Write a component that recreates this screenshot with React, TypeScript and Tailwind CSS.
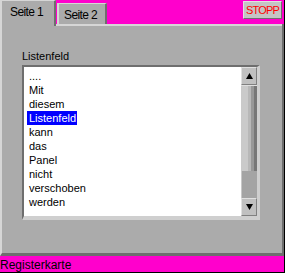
import React from "react";

const items = ["....", "Mit", "diesem", "Listenfeld", "kann", "das", "Panel", "nicht", "verschoben", "werden"];

export default function App() {
  return (
    <div
      className="w-[285px] h-[273px] bg-[#ff00cc] border-r border-b border-black flex flex-col text-[11px] leading-[13px] text-black"
      style={{ fontFamily: '"Liberation Sans", Arial, sans-serif' }}
    >
      {/* tab row */}
      <div className="flex h-[26px]">
        <div className="w-[56px] h-[26px] bg-[#ababab] border-l-2 border-t border-r-2 border-l-[#d6d6d6] border-t-[#d6d6d6] border-r-[#6e6e6e] pl-[8px] pt-[4px] text-[12px] leading-[14px] tracking-[-0.6px]">
          Seite 1
        </div>
        <div className="flex-1 flex flex-col">
          <div className="flex h-[24px] items-start">
            <div className="mt-[3px] ml-[1px] w-[50px] h-[21px] bg-[#ababab] border-l-2 border-t border-r-2 border-l-[#d6d6d6] border-t-[#d6d6d6] border-r-[#6e6e6e] pl-[5px] pt-[4px] text-[12px] leading-[14px] tracking-[-0.6px]">
              Seite 2
            </div>
            <div className="flex-1" />
            <div className="mt-[1px] mr-[2px] w-[39px] h-[18px] bg-[#c4c4c4] border border-t-[#e2e2e2] border-l-[#e2e2e2] border-r-[#6e6e6e] border-b-[#6e6e6e] flex items-center justify-center text-[#ff0000] tracking-[-0.8px]">
              STOPP
            </div>
          </div>
          <div className="flex h-[2px]">
            <div className="flex-1 bg-[#d6d6d6]" />
            <div className="w-[2px] bg-[#6e6e6e]" />
          </div>
        </div>
      </div>

      {/* panel */}
      <div className="flex-1 bg-[#ababab] border-l-2 border-r-2 border-b-[3px] border-l-[#d6d6d6] border-r-[#6e6e6e] border-b-[#6e6e6e] pt-[24px] pl-[20px]">
        <div className="h-[13px] mb-[2px]">Listenfeld</div>
        <div className="w-[238px] h-[155px] border-t-2 border-l-2 border-r-[3px] border-b-[4px] border-t-[#6e6e6e] border-l-[#6e6e6e] border-r-[#cfcfcf] border-b-[#cfcfcf] flex">
          <div className="flex-1 bg-white pt-[2px] pl-[3px]">
            {items.map((it, i) => (
              <div key={i} className="h-[14px] leading-[14px]">
                <span className={i === 3 ? "inline-block px-[2px] pr-[1px] bg-[#0000ff] text-white" : "inline-block px-[2px]"}>{it}</span>
              </div>
            ))}
          </div>
          {/* scrollbar */}
          <div className="w-[16px] flex flex-col bg-[#a8a8a8]">
            <div className="h-[18px] bg-[#c0c0c0] border border-t-[#e0e0e0] border-l-[#e0e0e0] border-r-[#808080] border-b-[#808080] flex items-center justify-center">
              <svg width="7" height="6" viewBox="0 0 7 6"><polygon points="3.5,0 7,6 0,6" fill="#000" /></svg>
            </div>
            <div className="h-[86px] flex border-t border-t-[#e0e0e0]">
              <div className="w-[7px] bg-[#cacaca]" />
              <div className="w-[3px] bg-[#b8b8b8]" />
              <div className="w-[3px] bg-[#989898]" />
              <div className="w-[3px] bg-[#777777]" />
            </div>
            <div className="flex-1 bg-[#a4a4a4] border-l border-l-[#c8c8c8]" />
            <div className="h-[18px] bg-[#c0c0c0] border border-t-[#e0e0e0] border-l-[#e0e0e0] border-r-[#808080] border-b-[#808080] flex items-center justify-center">
              <svg width="7" height="6" viewBox="0 0 7 6"><polygon points="0,0 7,0 3.5,6" fill="#000" /></svg>
            </div>
          </div>
        </div>
      </div>

      {/* status bar */}
      <div className="h-[16px] pt-[2px] text-[12px] leading-[14px]">Registerkarte</div>
    </div>
  );
}
